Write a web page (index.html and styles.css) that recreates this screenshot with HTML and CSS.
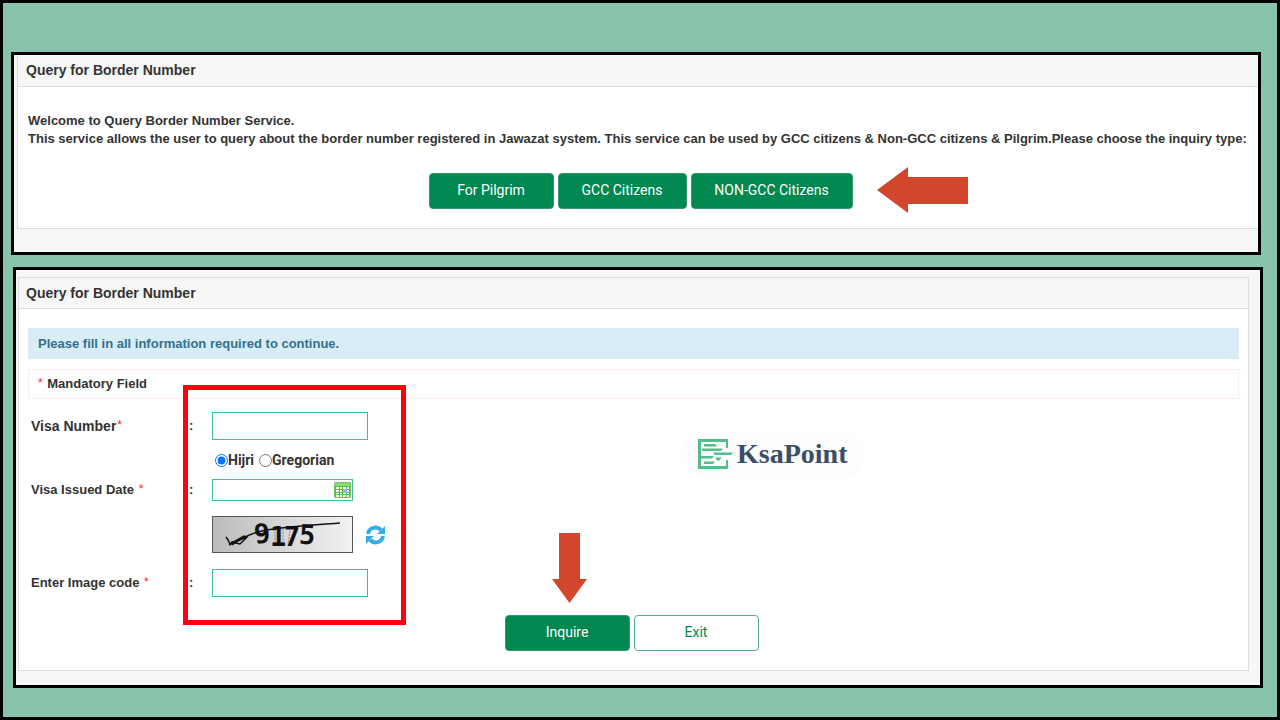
FILE: index.html
```html
<!DOCTYPE html>
<html lang="en">
<head>
    <meta charset="UTF-8">
    <meta name="viewport" content="width=device-width, initial-scale=1.0">
    <title>Query for Border Number</title>
    <link rel="stylesheet" href="styles.css">
</head>
<body>
    <section class="frame frame-top">
        <div class="panel panel-open">
            <h2 class="panel-title">Query for Border Number</h2>
            <div class="panel-body intro">
                <p>Welcome to Query Border Number Service.</p>
                <p>This service allows the user to query about the border number registered in Jawazat system. This service can be used by GCC citizens &amp; Non-GCC citizens &amp; Pilgrim.Please choose the inquiry type:</p>
                <div class="buttons">
                    <button type="button" class="btn btn-pilgrim">For Pilgrim</button>
                    <button type="button" class="btn btn-gcc">GCC Citizens</button>
                    <button type="button" class="btn btn-non-gcc">NON-GCC Citizens</button>
                    <svg class="arrow-left" viewBox="0 0 91 46"><path d="M0 23L31 0V10H91V37H31V46Z"/></svg>
                </div>
            </div>
        </div>
    </section>

    <section class="frame frame-form">
        <div class="panel">
            <h2 class="panel-title">Query for Border Number</h2>
            <form class="panel-body">
                <div class="alert">Please fill in all information required to continue.</div>
                <div class="mandatory"><span class="star">*</span> Mandatory Field</div>

                <div class="fields">
                    <div class="row row-visa">
                        <label class="big" for="visa">Visa Number<span class="star">*</span></label>
                        <span class="colon">:</span>
                        <input type="text" id="visa" class="text-box">
                    </div>
                    <div class="row row-calendar">
                        <div class="radios">
                            <input type="radio" name="calendar" id="hijri" checked><label for="hijri">Hijri</label>
                            <input type="radio" name="calendar" id="gregorian"><label for="gregorian">Gregorian</label>
                        </div>
                    </div>
                    <div class="row">
                        <label for="issued">Visa Issued Date <span class="star">*</span></label>
                        <span class="colon">:</span>
                        <div class="date-box">
                            <input type="text" id="issued">
                            <button type="button" class="icon-btn" aria-label="Open calendar">
                                <svg width="17" height="16" viewBox="0 0 17 16">
                                    <rect x=".5" y=".5" width="16" height="15" rx="1" fill="#5cb84c" stroke="#74bd68"/>
                                    <path d="M1 1h15v3H1z" fill="#86dc6c"/>
                                    <path d="M2 5h3v2H2zM6 5h2v2H6zM9 5h3v2H9zM13 5h2v2h-2zM2 8h3v2H2zM6 8h2v2H6zM13 8h2v2h-2zM2 11h3v1H2zM6 11h2v1H6zM9 11h3v1H9zM13 11h2v1h-2zM2 13h3v2H2zM6 13h2v2H6zM9 13h3v2H9zM13 13h2v2h-2z" fill="#effbe9"/>
                                    <path d="M9 7h4v4H9z" fill="#8db8ee"/>
                                </svg>
                            </button>
                        </div>
                    </div>
                    <div class="row row-captcha">
                        <div class="captcha">
                            <svg width="139" height="35" viewBox="0 0 139 35" fill="none" stroke="#111">
                                <path d="M62 12v16M70 12v16M77 14l-2 14M84 13l-7 16" stroke="#888" stroke-dasharray="2 1"/>
                                <g class="digits">
                                    <text x="41" y="26" transform="rotate(-6 49 18)">9</text>
                                    <text x="57" y="29">1</text>
                                    <text x="71" y="29">7</text>
                                    <text x="86" y="27" transform="rotate(4 94 18)">5</text>
                                </g>
                                <path d="M19 28C30 20 40 15 54 13C75 9 98 8 127 6" stroke-width="1.500"/>
                                <path d="M13 20Q16 24 17 27L31 19L34 20L27 27L18 25M16 28L33 20" stroke-width="1.500"/>
                            </svg>
                        </div>
                        <button type="button" class="icon-btn" aria-label="Refresh image">
                            <svg width="21" height="20" viewBox="0 0 21 20" fill="none" stroke="#36aee2" stroke-width="4">
                                <path d="M3 9C4 2 12 1 16 5M18 11C17 18 9 19 5 15"/>
                                <path d="M20 1V9H12ZM1 19V11H9Z" fill="#36aee2" stroke="none"/>
                            </svg>
                        </button>
                    </div>
                    <div class="row">
                        <label for="code">Enter Image code <span class="star">*</span></label>
                        <span class="colon">:</span>
                        <input type="text" id="code" class="text-box">
                    </div>
                    <div class="highlight"></div>
                </div>

                <div class="buttons buttons-form">
                    <button type="submit" class="btn">Inquire</button>
                    <button type="button" class="btn btn-outline">Exit</button>
                    <svg class="arrow-down" viewBox="0 0 35 70"><path d="M7 0H28V46H35L17.500 70L0 46H7Z"/></svg>
                </div>

                <div class="logo">
                    <svg width="35" height="30" viewBox="0 0 35 30" fill="#55bd8b">
                        <path d="M0 0H30V9H28V3H3V27H28V21H30V30H0Z"/>
                        <path d="M6 5H17L19 7.500H6ZM4 9.500H25L23 12H4ZM15 13.500H35L33 16H17ZM2 17H16L14 19.500H2ZM17 18.500H24L21 21.500H19ZM6 22.500H17L15 25H6Z"/>
                    </svg>
                    <span>KsaPoint</span>
                </div>
            </form>
        </div>
    </section>
</body>
</html>
```
FILE: styles.css
```css
* {
    box-sizing: border-box;
}
body {
    margin: 0;
    min-height: 100vh;
    padding: 49px 14px 20px 8px;
    border: 3px solid #000;
    background-color: #87c4ab;
    font-family: "Liberation Sans", Arial, sans-serif;
    font-size: 13px;
    font-weight: bold;
    line-height: 18px;
    color: #333;
}
h2, p {
    margin: 0;
}
.frame {
    border: 3px solid #000;
    background-color: #f7f7f7;
}
.frame-top {
    margin-right: 2px;
    padding: 0 0 23px 3px;
}
.frame-form {
    margin: 12px 0 0 2px;
    padding: 7px 11px 14px 2px;
}
.panel {
    border: 1px solid #ddd;
    background-color: #fff;
}
.panel-open {
    border-top: 0;
    border-right: 0;
}
.panel-title {
    padding: 6px 8px 7px;
    border-bottom: 1px solid #ddd;
    background-color: #f7f7f7;
    font-size: 14px;
    line-height: 18px;
}
.frame-form .panel-title {
    padding: 6px 7px;
}
.panel-body {
    position: relative;
    padding: 19px 9px;
}
.intro {
    padding: 25px 5px 19px 10px;
}

/* Buttons */
.buttons {
    position: relative;
    display: flex;
    justify-content: center;
    gap: 4px;
    margin-top: 25px;
}
.btn {
    width: 125px;
    height: 36px;
    padding: 0 0 2px;
    border: 1px solid #30996d;
    border-radius: 4px;
    background-color: #008850;
    color: #fff;
    font-family: Roboto, sans-serif;
    font-size: 14px;
    cursor: pointer;
}
.btn-gcc {
    width: 129px;
}
.btn-non-gcc {
    width: 162px;
}
.btn-outline {
    border-color: #55ad89;
    background-color: #fff;
    color: #008850;
}
.arrow-left, .arrow-down {
    position: absolute;
    fill: #d1462d;
}
.arrow-left {
    top: -6px;
    left: calc(50% + 236px);
    width: 91px;
    height: 46px;
}
.arrow-down {
    bottom: 48px;
    left: calc(50% - 82px);
    width: 35px;
    height: 70px;
}

/* Form */
.alert {
    padding: 7px 10px 6px;
    background-color: #d9edf7;
    color: #31708f;
}
.mandatory {
    margin-top: 10px;
    padding: 5px 8px;
    border: 1px dotted #f5dde2;
}
.star {
    margin: 0 1px;
    color: #f22;
    font-size: 12px;
    font-weight: normal;
    vertical-align: top;
    line-height: 16px;
}
.fields {
    position: relative;
    padding: 13px 3px 0;
}
.row {
    display: grid;
    grid-template-columns: 158px 23px auto auto;
    justify-content: start;
    align-items: center;
    margin-bottom: 15px;
}
.row-visa {
    margin-bottom: 9px;
}
.big, .radios {
    font-size: 14px;
}
.row-calendar {
    margin-bottom: 8px;
}
.row-captcha {
    margin-bottom: 16px;
}
.radios, .captcha {
    grid-column: 3;
}
.radios {
    display: flex;
    align-items: center;
    height: 22px;
    padding-left: 3px;
    font-family: Roboto, sans-serif;
}
.radios input {
    width: 13px;
    height: 13px;
    margin: 0;
}
.radios label {
    margin-right: 5px;
}
.text-box, .date-box {
    width: 156px;
    height: 28px;
    border: 1px solid #45bd8b;
    background-color: #fff;
    font-size: 13px;
}
.date-box {
    display: flex;
    align-items: center;
    width: 141px;
    height: 22px;
}
.date-box input {
    flex: 1;
    min-width: 0;
    border: 0;
    outline: 0;
    background: none;
}
.icon-btn {
    display: flex;
    padding: 0 1px;
    border: 0;
    background: none;
    cursor: pointer;
}
.captcha {
    width: 141px;
    height: 37px;
    border: 1px solid #555;
    background: linear-gradient(to right, #bbb, #f2f2f2);
}
.digits {
    fill: #111;
    stroke: none;
    font-family: "DejaVu Sans Mono", monospace;
    font-size: 27px;
}
.row-captcha .icon-btn {
    margin-left: 11px;
}
.highlight {
    position: absolute;
    top: -14px;
    left: 155px;
    width: 223px;
    height: 240px;
    border: 5px solid #ff0010;
    pointer-events: none;
}
.buttons-form {
    margin-top: 18px;
    padding-right: 4px;
}

/* Logo */
.logo {
    position: absolute;
    top: 121px;
    left: 662px;
    display: flex;
    align-items: center;
    gap: 4px;
    width: 184px;
    height: 48px;
    padding-left: 17px;
    border-radius: 24px;
    background-color: #fdfdfd;
    color: #3c4d66;
    font-family: "Liberation Serif", serif;
    font-size: 28px;
}
```
